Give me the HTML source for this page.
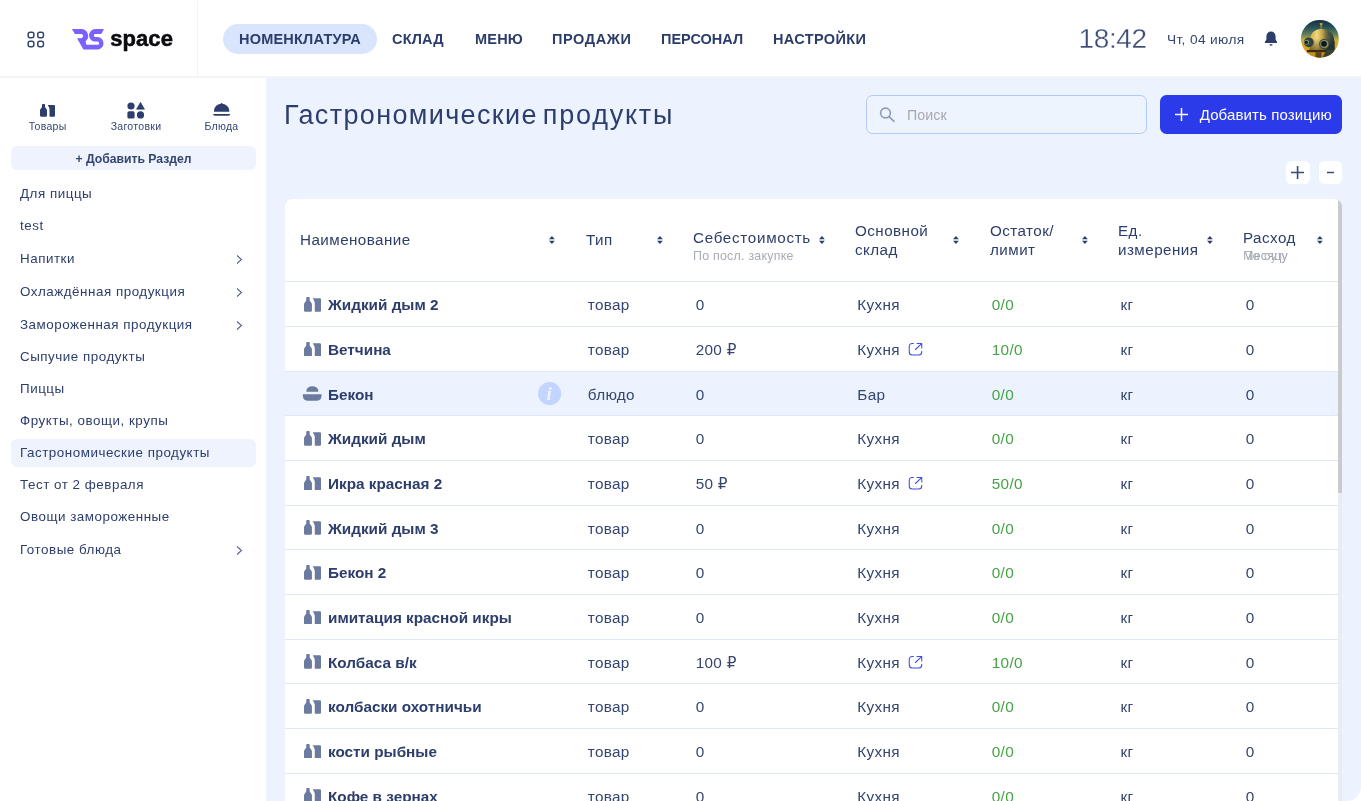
<!DOCTYPE html>
<html lang="ru">
<head>
<meta charset="utf-8">
<title>Гастрономические продукты</title>
<style>
*{box-sizing:border-box;margin:0;padding:0}
html,body{width:1361px;height:801px;overflow:hidden;background:#fff}
body{font-family:"Liberation Sans","DejaVu Sans",sans-serif;color:#2d3e6c;position:relative;-webkit-font-smoothing:antialiased}
#app{position:absolute;left:0;top:0;width:1361px;height:801px;will-change:transform}
.abs{position:absolute}
/* header */
#hdr{position:absolute;left:0;top:0;width:1361px;height:78px;background:#fff;border-bottom:2px solid #f2f4f8}
#hdr .vdiv{position:absolute;left:196.600px;top:1px;width:1.400px;height:75px;background:#f2f3f6}
.nav{position:absolute;top:24px;height:30px;line-height:30px;font-weight:700;font-size:14.5px;color:#2c3d6b;white-space:nowrap;letter-spacing:.2px}
.nav.act{background:#d9e4fd;border-radius:15px;left:223px;width:154px;text-align:center}
#clock{position:absolute;left:1078.500px;top:20px;font-size:28px;line-height:38px;color:#3a4b75;font-weight:400;letter-spacing:-.35px;-webkit-text-stroke:.35px #fff}
#date{position:absolute;left:1167px;top:31px;font-size:13.7px;line-height:18px;color:#34466f;white-space:nowrap;letter-spacing:.37px}
/* sidebar */
#side{position:absolute;left:0;top:78px;width:266px;height:723px;background:#fff}
.tab{position:absolute;top:119.500px;font-size:10.5px;line-height:13px;letter-spacing:.3px;color:#34466f;white-space:nowrap;transform:translateX(-50%)}
#addsec{position:absolute;left:11px;top:146px;width:245px;height:24px;border-radius:6px;background:#eef3fe;text-align:center;font-size:12.2px;line-height:26px;font-weight:700;color:#34466f}
.mi{position:absolute;left:11px;width:245px;height:28px;line-height:28.800px;padding-left:9px;font-size:13.400px;letter-spacing:.52px;color:#2d3e6c;white-space:nowrap;border-radius:6px}
.mi.sel{background:#eef3fe}
.mi svg{position:absolute;left:224px;top:8.700px}
/* content */
#main{position:absolute;left:265.800px;top:78px;width:1095.200px;height:723px;background:#edf3fe;border-radius:0 0 14px 0}
#title{position:absolute;left:284px;top:96px;font-size:27px;letter-spacing:1.3px;line-height:38px;color:#2d3e6c;white-space:nowrap;font-weight:400}
#search{position:absolute;left:866px;top:95.300px;width:280.500px;height:38.500px;border:1px solid #b3c9f8;border-radius:6.500px;background:#eef4fe}
#search span{position:absolute;left:40px;top:0;line-height:38.500px;font-size:14.200px;color:#a8a8ac;letter-spacing:.1px}
#addbtn{position:absolute;left:1160.400px;top:95.300px;width:181.800px;height:38.600px;border-radius:6.500px;background:#2b3bea;color:#fff;font-size:15px;letter-spacing:.12px;line-height:38px;white-space:nowrap}
#addbtn span{position:absolute;left:39.300px;top:.3px}
.sq{position:absolute;top:161.200px;width:23.400px;height:23px;background:#fff;border-radius:5.500px}
/* table */
#card{position:absolute;left:284.5px;top:199px;width:1057.8px;height:620px;background:#e9edf3;border-radius:8px 8px 0 0;overflow:hidden}
#card .in{position:absolute;left:0;top:0;width:1053.8px;height:620px;background:#fff}
#sb{position:absolute;left:1053.8px;top:0;width:4px;height:294px;background:#cacaca}
.th{position:absolute;font-size:15.2px;line-height:18.500px;color:#2d3e6c;white-space:nowrap;letter-spacing:.25px}
.sub{position:absolute;font-size:12.4px;line-height:14px;color:#a7abb3;white-space:nowrap;letter-spacing:.25px}
.srt{position:absolute;top:36px}
.row{position:absolute;left:0;width:1053.8px;height:44.68px;border-top:1px solid #dfe8fb;font-size:15.3px;letter-spacing:.3px;line-height:45px;color:#34466f;white-space:nowrap}
.row.hl{background:#edf3fe}
.row span{position:absolute;top:0}
.row .n{left:43.5px;font-weight:700;color:#2d3e6c;font-size:15.3px;letter-spacing:0}
.row .t{left:303.300px}
.row .c{left:411.200px}
.row .w{left:572.800px}
.row .o{left:707.300px;color:#44a344}
.row .u{left:836px}
.row .r{left:961.200px}
.row svg.ic{position:absolute;left:19.500px;top:14.500px}
.row svg.ext{position:absolute;left:623px;top:15px}
</style>
</head>
<body>
<div id="app">
<div id="hdr">
  <svg class="abs" style="left:26px;top:30px" width="20" height="20" viewBox="0 0 20 20" fill="none" stroke="#324471" stroke-width="1.500">
    <rect x="2.150" y="2.150" width="5.700" height="5.500" rx="2"/><rect x="11.750" y="2.150" width="5.700" height="5.500" rx="2"/>
    <rect x="2.150" y="11.150" width="5.700" height="5.500" rx="2"/><rect x="11.750" y="11.150" width="5.700" height="5.500" rx="2"/>
  </svg>
  <svg class="abs" style="left:68px;top:24px" width="44" height="30" viewBox="68 24 44 30">
    <path fill="#7b61ff" d="M71.9 29.050H81.050A6.980 6.980 0 0 1 85.600 41.400L86.350 44.800H97.500A1.600 1.600 0 0 0 97.500 41.600H95.240A6.440 6.280 0 0 1 95.240 29.050H104L101.300 33.900H95.240A1.570 1.570 0 0 0 95.240 37.030H97.500A6.480 6.300 0 0 1 97.500 49.600H83.400L77 38.160H81.050A2.100 2.130 0 0 0 81.050 33.900H74.900Z"/>
  </svg>
  <div class="abs" style="left:110.300px;top:24px;font-size:22px;line-height:30px;font-weight:700;color:#0c0c10;letter-spacing:.05px;-webkit-text-stroke:.5px #0c0c10">space</div>
  <div class="vdiv"></div>
  <div class="nav act">НОМЕНКЛАТУРА</div>
  <div class="nav" style="left:392px">СКЛАД</div>
  <div class="nav" style="left:475px">МЕНЮ</div>
  <div class="nav" style="left:552px;letter-spacing:.58px">ПРОДАЖИ</div>
  <div class="nav" style="left:661px;letter-spacing:0">ПЕРСОНАЛ</div>
  <div class="nav" style="left:773px;letter-spacing:.35px">НАСТРОЙКИ</div>
  <div id="clock">18:42</div>
  <div id="date">Чт, 04 июля</div>
  <svg class="abs" style="left:1263px;top:30px" width="16" height="18" viewBox="0 0 16 18">
    <path fill="#2d3e6c" d="M8 1.500C5.200 1.500 3.400 3.600 3.400 6.300V9.600L1.900 12V13H14.100V12L12.600 9.600V6.300C12.600 3.600 10.800 1.500 8 1.500ZM6.400 14.200A1.600 1.600 0 0 0 9.600 14.200Z"/>
  </svg>
  <svg class="abs" style="left:1300px;top:19.300px" width="40" height="40" viewBox="0 0 40 40">
    <defs>
      <clipPath id="avc"><circle cx="19.850" cy="19.850" r="18.950"/></clipPath>
      <linearGradient id="avbg" x1="0" y1="0" x2="0" y2="1"><stop offset="0" stop-color="#14293c"/><stop offset=".2" stop-color="#27505a"/><stop offset=".38" stop-color="#5f7d5c"/><stop offset=".52" stop-color="#c9ad3e"/><stop offset=".7" stop-color="#dba626"/><stop offset="1" stop-color="#b9811a"/></linearGradient>
      <linearGradient id="avd" x1="0" y1="0" x2="1" y2="0"><stop offset="0" stop-color="#cfa93a"/><stop offset=".3" stop-color="#f0d77c"/><stop offset=".5" stop-color="#c9a745"/><stop offset=".7" stop-color="#5a6247"/><stop offset="1" stop-color="#22363c"/></linearGradient>
      <linearGradient id="avs" x1="0" y1="0" x2="0" y2="1"><stop offset="0" stop-color="#000" stop-opacity="0"/><stop offset=".45" stop-color="#000" stop-opacity="0"/><stop offset="1" stop-color="#2a1c05" stop-opacity=".5"/></linearGradient>
    </defs>
    <g clip-path="url(#avc)">
      <rect width="40" height="40" fill="url(#avbg)"/>
      <rect x="20.300" y="5.500" width="1.700" height="5.500" fill="#8a7434"/>
      <path d="M19.600 4H22.800L22.200 6.600H20.200Z" fill="#b4964a"/>
      <path d="M9.500 31V24Q10 10 21.500 10Q34 10 34.500 24V31Z" fill="url(#avd)"/>
      <path d="M9.500 31V24Q10 10 21.500 10Q34 10 34.500 24V31Z" fill="url(#avs)"/>
      <path d="M26 31Q30 24 34.400 22V40H22Z" fill="#1f3236" opacity=".85"/>
      <rect x="7" y="31" width="19.500" height="2.200" fill="#3b2c10"/>
      <rect x="15.500" y="33.200" width="6" height="7" fill="#5c4516"/>
      <circle cx="8.800" cy="23.300" r="4.900" fill="#2c4340"/><circle cx="6.600" cy="23.300" r="2.500" fill="#7d8c72"/><circle cx="6.300" cy="23.300" r="1.600" fill="#121c1a"/>
      <circle cx="24.300" cy="25" r="5.200" fill="#3c4a40"/><circle cx="24.300" cy="25" r="4.100" fill="#8f9068"/><circle cx="24" cy="24.800" r="2.900" fill="#10181a"/>
    </g>
  </svg>
</div>

<div id="side"></div>
<div id="main"></div>

<!-- sidebar content (page coords) -->
<svg class="abs" style="left:40px;top:104px" width="15" height="12.750" viewBox="0 0 15 12.750" fill="#2d3e6c">
  <path d="M2.700 0H4.300Q5 0 5 .7V3L6.600 5.200Q7 5.800 7 6.500V11.600Q7 12.750 5.900 12.750H1.100Q0 12.750 0 11.600V6.500Q0 5.800 .4 5.200L2 3V.7Q2 0 2.700 0Z"/>
  <path d="M7.750 1H14Q15 1 15 2V11.750Q15 12.750 14 12.750H10.300Q9.500 12.750 9.500 12V5.200Q9.500 4.300 9.100 3.600Z"/>
</svg>
<div class="tab" style="left:47.600px">Товары</div>
<svg class="abs" style="left:126.750px;top:101.750px" width="18" height="17" viewBox="0 0 18 17" fill="#2d3e6c">
  <circle cx="4" cy="4" r="3.600"/><path d="M13.500 0.300L17.500 7.200H9.500Z" stroke="#2d3e6c" stroke-width=".6" stroke-linejoin="round"/>
  <rect x="0.400" y="9.300" width="7.200" height="7.200" rx="1.600"/><circle cx="13.500" cy="12.900" r="3.600"/>
</svg>
<div class="tab" style="left:136px">Заготовки</div>
<svg class="abs" style="left:212px;top:102px" width="20" height="15" viewBox="212 102 20 15" fill="#2d3e6c">
  <path d="M214 111.750V110.600A7.620 6.850 0 0 1 229.250 110.600V111.750Z"/><circle cx="221.600" cy="103.900" r=".95"/>
  <path d="M213 113.900H230.250Q229.800 115.750 228 115.750H215.200Q213.500 115.750 213 113.900Z"/>
</svg>
<div class="tab" style="left:221.500px">Блюда</div>
<div id="addsec">+ Добавить Раздел</div>

<div class="mi" style="top:180px">Для пиццы</div>
<div class="mi" style="top:212px">test</div>
<div class="mi" style="top:245px">Напитки<svg width="9" height="11" viewBox="0 0 9 11" fill="none" stroke="#56658b" stroke-width="1.100"><path d="M2 1.500L6.500 5.500L2 9.500"/></svg></div>
<div class="mi" style="top:278px">Охлаждённая продукция<svg width="9" height="11" viewBox="0 0 9 11" fill="none" stroke="#56658b" stroke-width="1.100"><path d="M2 1.500L6.500 5.500L2 9.500"/></svg></div>
<div class="mi" style="top:311px">Замороженная продукция<svg width="9" height="11" viewBox="0 0 9 11" fill="none" stroke="#56658b" stroke-width="1.100"><path d="M2 1.500L6.500 5.500L2 9.500"/></svg></div>
<div class="mi" style="top:343px">Сыпучие продукты</div>
<div class="mi" style="top:375px">Пиццы</div>
<div class="mi" style="top:407px">Фрукты, овощи, крупы</div>
<div class="mi sel" style="top:439px">Гастрономические продукты</div>
<div class="mi" style="top:471px">Тест от 2 февраля</div>
<div class="mi" style="top:503px">Овощи замороженные</div>
<div class="mi" style="top:536px">Готовые блюда<svg width="9" height="11" viewBox="0 0 9 11" fill="none" stroke="#56658b" stroke-width="1.100"><path d="M2 1.500L6.500 5.500L2 9.500"/></svg></div>

<!-- main content -->
<div id="title"><span style="letter-spacing:1.36px">Гастрономические</span> <span style="letter-spacing:1.750px;margin-left:-3.800px">продукты</span></div>
<div id="search">
  <svg class="abs" style="left:11px;top:8.700px" width="18" height="18" viewBox="0 0 18 18" fill="none" stroke="#8e9bb8" stroke-width="1.600"><circle cx="7.500" cy="8" r="4.900"/><path d="M11.100 11.600L16 16.300" stroke-linecap="round"/></svg>
  <span>Поиск</span>
</div>
<div id="addbtn">
  <svg class="abs" style="left:14.600px;top:13px" width="13" height="13" viewBox="0 0 13 13" stroke="#fff" stroke-width="1.500"><path d="M6.500 0V13M0 6.500H13"/></svg>
  <span>Добавить позицию</span>
</div>
<div class="sq" style="left:1286.200px"><svg class="abs" style="left:5.100px;top:4.900px" width="13.200" height="13" viewBox="0 0 13.200 13" stroke="#3a4a76" stroke-width="1.600"><path d="M6.600 0V13M0 6.500H13.200"/></svg></div>
<div class="sq" style="left:1318.700px"><svg class="abs" style="left:8.200px;top:9.900px" width="7.200" height="3" viewBox="0 0 7.200 3" stroke="#3a4a76" stroke-width="1.500"><path d="M0 1.500H7.200"/></svg></div>

<div id="card"><div class="in">
<div class="th" style="left:15.5px;top:32px;letter-spacing:0.45px">Наименование</div><svg class="srt" style="left:264.4px;top:36.750px" width="5.800" height="8" viewBox="0 0 5.800 8" fill="#2d3e6c"><path d="M2.900 0L5.800 3.300H0Z"/><path d="M2.900 8L5.800 4.700H0Z"/></svg>
<div class="th" style="left:301.5px;top:32px;letter-spacing:0.5px">Тип</div><svg class="srt" style="left:372.6px;top:36.750px" width="5.800" height="8" viewBox="0 0 5.800 8" fill="#2d3e6c"><path d="M2.900 0L5.800 3.300H0Z"/><path d="M2.900 8L5.800 4.700H0Z"/></svg>
<div class="th" style="left:408.5px;top:30px;letter-spacing:0.7px">Себестоимость</div><div class="sub" style="left:408.5px;top:50px">По посл. закупке</div><svg class="srt" style="left:534.4px;top:36.750px" width="5.800" height="8" viewBox="0 0 5.800 8" fill="#2d3e6c"><path d="M2.900 0L5.800 3.300H0Z"/><path d="M2.900 8L5.800 4.700H0Z"/></svg>
<div class="th" style="left:570.5px;top:23px;letter-spacing:0.45px">Основной<br>склад</div><svg class="srt" style="left:668.8px;top:36.750px" width="5.800" height="8" viewBox="0 0 5.800 8" fill="#2d3e6c"><path d="M2.900 0L5.800 3.300H0Z"/><path d="M2.900 8L5.800 4.700H0Z"/></svg>
<div class="th" style="left:705.5px;top:23px;letter-spacing:0.45px">Остаток/<br>лимит</div><svg class="srt" style="left:797.8px;top:36.750px" width="5.800" height="8" viewBox="0 0 5.800 8" fill="#2d3e6c"><path d="M2.900 0L5.800 3.300H0Z"/><path d="M2.900 8L5.800 4.700H0Z"/></svg>
<div class="th" style="left:833.5px;top:23px;letter-spacing:0.45px">Ед.<br>измерения</div><svg class="srt" style="left:922.5px;top:36.750px" width="5.800" height="8" viewBox="0 0 5.800 8" fill="#2d3e6c"><path d="M2.900 0L5.800 3.300H0Z"/><path d="M2.900 8L5.800 4.700H0Z"/></svg>
<div class="th" style="left:958.5px;top:30px;letter-spacing:0.45px">Расход</div><div class="sub" style="left:958.5px;top:50px;color:#9da2ac">Месяцу</div><div class="sub" style="left:958.5px;top:50px;color:#b3b7bf;letter-spacing:.6px">По сут.</div><svg class="srt" style="left:1032.75px;top:36.750px" width="5.800" height="8" viewBox="0 0 5.800 8" fill="#2d3e6c"><path d="M2.900 0L5.800 3.300H0Z"/><path d="M2.900 8L5.800 4.700H0Z"/></svg>
<div class="row" style="top:82.35px"><svg class="ic" width="17" height="14.800" viewBox="0 0 15 12.750" preserveAspectRatio="none" fill="#6b7a9f"><path d="M2.700 0H4.300Q5 0 5 .7V3L6.600 5.200Q7 5.800 7 6.500V11.600Q7 12.750 5.900 12.750H1.100Q0 12.750 0 11.600V6.500Q0 5.800 .4 5.200L2 3V.7Q2 0 2.700 0Z"/><path d="M7.750 1H14Q15 1 15 2V11.750Q15 12.750 14 12.750H10.300Q9.500 12.750 9.500 12V5.200Q9.500 4.300 9.100 3.600Z"/></svg><span class="n">Жидкий дым 2</span><span class="t">товар</span><span class="c">0</span><span class="w">Кухня</span><span class="o">0/0</span><span class="u">кг</span><span class="r">0</span></div>
<div class="row" style="top:127.03px"><svg class="ic" width="17" height="14.800" viewBox="0 0 15 12.750" preserveAspectRatio="none" fill="#6b7a9f"><path d="M2.700 0H4.300Q5 0 5 .7V3L6.600 5.200Q7 5.800 7 6.500V11.600Q7 12.750 5.900 12.750H1.100Q0 12.750 0 11.600V6.500Q0 5.800 .4 5.200L2 3V.7Q2 0 2.700 0Z"/><path d="M7.750 1H14Q15 1 15 2V11.750Q15 12.750 14 12.750H10.300Q9.500 12.750 9.500 12V5.200Q9.500 4.300 9.100 3.600Z"/></svg><span class="n">Ветчина</span><span class="t">товар</span><span class="c">200 ₽</span><span class="w">Кухня</span><svg class="abs" style="left:623.400px;top:15px" width="16" height="15" viewBox="0 0 16 15" fill="none" stroke="#3d4de8" stroke-width="1.050" stroke-linecap="round" stroke-linejoin="round"><path d="M5.400 1.500H4.250Q1.250 1.500 1.250 4.500V10Q1.250 13 4.250 13H10.750Q13.750 13 13.750 10V9.300"/><path d="M7.400 7.500L13.400 1.850M9 1.500H13.750V6"/></svg><span class="o">10/0</span><span class="u">кг</span><span class="r">0</span></div>
<div class="row hl" style="top:171.71px"><svg class="abs" style="left:-.5px;top:0" width="45" height="40" viewBox="0 0 45 40" fill="#6b7a9f"><path d="M22.400 19.300V18.800A5.950 4.600 0 0 1 34.300 18.800V19.300Q34.300 19.800 33.800 19.800H22.900Q22.400 19.800 22.400 19.300Z"/><path d="M18.800 22.300H37.600V23.300Q37.600 28.800 32 28.800H24.400Q18.800 28.800 18.800 23.300Z"/></svg><span class="n">Бекон</span><svg class="abs" style="left:253.400px;top:9.800px" width="23.200" height="23.200" viewBox="0 0 24 24"><circle cx="12" cy="12" r="12" fill="#c3d5fe"/><text x="11.600" y="18.600" font-family="Liberation Serif, serif" font-style="italic" font-weight="700" font-size="19.500" fill="#edf3fe" text-anchor="middle">i</text></svg><span class="t">блюдо</span><span class="c">0</span><span class="w">Бар</span><span class="o">0/0</span><span class="u">кг</span><span class="r">0</span></div>
<div class="row" style="top:216.39px"><svg class="ic" width="17" height="14.800" viewBox="0 0 15 12.750" preserveAspectRatio="none" fill="#6b7a9f"><path d="M2.700 0H4.300Q5 0 5 .7V3L6.600 5.200Q7 5.800 7 6.500V11.600Q7 12.750 5.900 12.750H1.100Q0 12.750 0 11.600V6.500Q0 5.800 .4 5.200L2 3V.7Q2 0 2.700 0Z"/><path d="M7.750 1H14Q15 1 15 2V11.750Q15 12.750 14 12.750H10.300Q9.500 12.750 9.500 12V5.200Q9.500 4.300 9.100 3.600Z"/></svg><span class="n">Жидкий дым</span><span class="t">товар</span><span class="c">0</span><span class="w">Кухня</span><span class="o">0/0</span><span class="u">кг</span><span class="r">0</span></div>
<div class="row" style="top:261.07px"><svg class="ic" width="17" height="14.800" viewBox="0 0 15 12.750" preserveAspectRatio="none" fill="#6b7a9f"><path d="M2.700 0H4.300Q5 0 5 .7V3L6.600 5.200Q7 5.800 7 6.500V11.600Q7 12.750 5.900 12.750H1.100Q0 12.750 0 11.600V6.500Q0 5.800 .4 5.200L2 3V.7Q2 0 2.700 0Z"/><path d="M7.750 1H14Q15 1 15 2V11.750Q15 12.750 14 12.750H10.300Q9.500 12.750 9.500 12V5.200Q9.500 4.300 9.100 3.600Z"/></svg><span class="n">Икра красная 2</span><span class="t">товар</span><span class="c">50 ₽</span><span class="w">Кухня</span><svg class="abs" style="left:623.400px;top:15px" width="16" height="15" viewBox="0 0 16 15" fill="none" stroke="#3d4de8" stroke-width="1.050" stroke-linecap="round" stroke-linejoin="round"><path d="M5.400 1.500H4.250Q1.250 1.500 1.250 4.500V10Q1.250 13 4.250 13H10.750Q13.750 13 13.750 10V9.300"/><path d="M7.400 7.500L13.400 1.850M9 1.500H13.750V6"/></svg><span class="o">50/0</span><span class="u">кг</span><span class="r">0</span></div>
<div class="row" style="top:305.75px"><svg class="ic" width="17" height="14.800" viewBox="0 0 15 12.750" preserveAspectRatio="none" fill="#6b7a9f"><path d="M2.700 0H4.300Q5 0 5 .7V3L6.600 5.200Q7 5.800 7 6.500V11.600Q7 12.750 5.900 12.750H1.100Q0 12.750 0 11.600V6.500Q0 5.800 .4 5.200L2 3V.7Q2 0 2.700 0Z"/><path d="M7.750 1H14Q15 1 15 2V11.750Q15 12.750 14 12.750H10.300Q9.500 12.750 9.500 12V5.200Q9.500 4.300 9.100 3.600Z"/></svg><span class="n">Жидкий дым 3</span><span class="t">товар</span><span class="c">0</span><span class="w">Кухня</span><span class="o">0/0</span><span class="u">кг</span><span class="r">0</span></div>
<div class="row" style="top:350.43px"><svg class="ic" width="17" height="14.800" viewBox="0 0 15 12.750" preserveAspectRatio="none" fill="#6b7a9f"><path d="M2.700 0H4.300Q5 0 5 .7V3L6.600 5.200Q7 5.800 7 6.500V11.600Q7 12.750 5.900 12.750H1.100Q0 12.750 0 11.600V6.500Q0 5.800 .4 5.200L2 3V.7Q2 0 2.700 0Z"/><path d="M7.750 1H14Q15 1 15 2V11.750Q15 12.750 14 12.750H10.300Q9.500 12.750 9.500 12V5.200Q9.500 4.300 9.100 3.600Z"/></svg><span class="n">Бекон 2</span><span class="t">товар</span><span class="c">0</span><span class="w">Кухня</span><span class="o">0/0</span><span class="u">кг</span><span class="r">0</span></div>
<div class="row" style="top:395.11px"><svg class="ic" width="17" height="14.800" viewBox="0 0 15 12.750" preserveAspectRatio="none" fill="#6b7a9f"><path d="M2.700 0H4.300Q5 0 5 .7V3L6.600 5.200Q7 5.800 7 6.500V11.600Q7 12.750 5.900 12.750H1.100Q0 12.750 0 11.600V6.500Q0 5.800 .4 5.200L2 3V.7Q2 0 2.700 0Z"/><path d="M7.750 1H14Q15 1 15 2V11.750Q15 12.750 14 12.750H10.300Q9.500 12.750 9.500 12V5.200Q9.500 4.300 9.100 3.600Z"/></svg><span class="n">имитация красной икры</span><span class="t">товар</span><span class="c">0</span><span class="w">Кухня</span><span class="o">0/0</span><span class="u">кг</span><span class="r">0</span></div>
<div class="row" style="top:439.79px"><svg class="ic" width="17" height="14.800" viewBox="0 0 15 12.750" preserveAspectRatio="none" fill="#6b7a9f"><path d="M2.700 0H4.300Q5 0 5 .7V3L6.600 5.200Q7 5.800 7 6.500V11.600Q7 12.750 5.900 12.750H1.100Q0 12.750 0 11.600V6.500Q0 5.800 .4 5.200L2 3V.7Q2 0 2.700 0Z"/><path d="M7.750 1H14Q15 1 15 2V11.750Q15 12.750 14 12.750H10.300Q9.500 12.750 9.500 12V5.200Q9.500 4.300 9.100 3.600Z"/></svg><span class="n">Колбаса в/к</span><span class="t">товар</span><span class="c">100 ₽</span><span class="w">Кухня</span><svg class="abs" style="left:623.400px;top:15px" width="16" height="15" viewBox="0 0 16 15" fill="none" stroke="#3d4de8" stroke-width="1.050" stroke-linecap="round" stroke-linejoin="round"><path d="M5.400 1.500H4.250Q1.250 1.500 1.250 4.500V10Q1.250 13 4.250 13H10.750Q13.750 13 13.750 10V9.300"/><path d="M7.400 7.500L13.400 1.850M9 1.500H13.750V6"/></svg><span class="o">10/0</span><span class="u">кг</span><span class="r">0</span></div>
<div class="row" style="top:484.47px"><svg class="ic" width="17" height="14.800" viewBox="0 0 15 12.750" preserveAspectRatio="none" fill="#6b7a9f"><path d="M2.700 0H4.300Q5 0 5 .7V3L6.600 5.200Q7 5.800 7 6.500V11.600Q7 12.750 5.900 12.750H1.100Q0 12.750 0 11.600V6.500Q0 5.800 .4 5.200L2 3V.7Q2 0 2.700 0Z"/><path d="M7.750 1H14Q15 1 15 2V11.750Q15 12.750 14 12.750H10.300Q9.500 12.750 9.500 12V5.200Q9.500 4.300 9.100 3.600Z"/></svg><span class="n">колбаски охотничьи</span><span class="t">товар</span><span class="c">0</span><span class="w">Кухня</span><span class="o">0/0</span><span class="u">кг</span><span class="r">0</span></div>
<div class="row" style="top:529.15px"><svg class="ic" width="17" height="14.800" viewBox="0 0 15 12.750" preserveAspectRatio="none" fill="#6b7a9f"><path d="M2.700 0H4.300Q5 0 5 .7V3L6.600 5.200Q7 5.800 7 6.500V11.600Q7 12.750 5.900 12.750H1.100Q0 12.750 0 11.600V6.500Q0 5.800 .4 5.200L2 3V.7Q2 0 2.700 0Z"/><path d="M7.750 1H14Q15 1 15 2V11.750Q15 12.750 14 12.750H10.300Q9.500 12.750 9.500 12V5.200Q9.500 4.300 9.100 3.600Z"/></svg><span class="n">кости рыбные</span><span class="t">товар</span><span class="c">0</span><span class="w">Кухня</span><span class="o">0/0</span><span class="u">кг</span><span class="r">0</span></div>
<div class="row" style="top:573.83px"><svg class="ic" width="17" height="14.800" viewBox="0 0 15 12.750" preserveAspectRatio="none" fill="#6b7a9f"><path d="M2.700 0H4.300Q5 0 5 .7V3L6.600 5.200Q7 5.800 7 6.500V11.600Q7 12.750 5.900 12.750H1.100Q0 12.750 0 11.600V6.500Q0 5.800 .4 5.200L2 3V.7Q2 0 2.700 0Z"/><path d="M7.750 1H14Q15 1 15 2V11.750Q15 12.750 14 12.750H10.300Q9.500 12.750 9.500 12V5.200Q9.500 4.300 9.100 3.600Z"/></svg><span class="n">Кофе в зернах</span><span class="t">товар</span><span class="c">0</span><span class="w">Кухня</span><span class="o">0/0</span><span class="u">кг</span><span class="r">0</span></div>
</div><div id="sb"></div></div>
</div>
</body>
</html>
